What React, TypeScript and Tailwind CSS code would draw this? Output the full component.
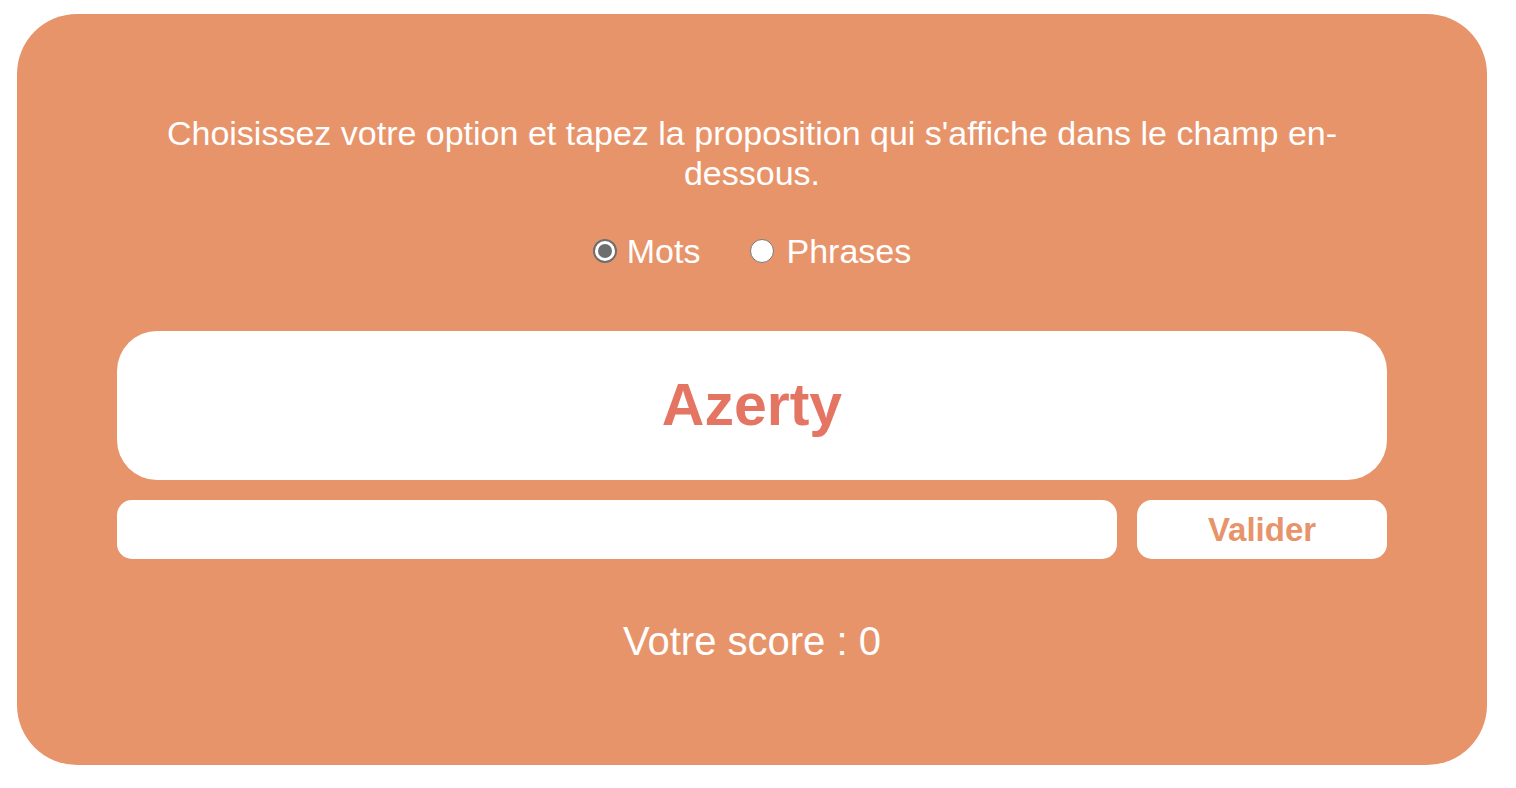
import React from "react";

export default function App() {
  return (
    <div className="min-h-[788px] bg-white pt-[14px] pl-[17px]" style={{ fontFamily: '"Liberation Sans", Arial, Helvetica, sans-serif' }}>
      <div className="w-[1470px] h-[751px] rounded-[60px] bg-[#E8946A] flex flex-col items-center pt-[99px]">
        <p className="w-[1270px] text-center text-white text-[34px] leading-[40px]">
          Choisissez votre option et tapez la proposition qui s'affiche dans le champ en-dessous.
        </p>
        <div className="mt-[38px] flex items-center h-[40px] text-white text-[34px]">
          <label className="flex items-center">
            <span className="w-[24px] h-[24px] rounded-full border-[2px] border-[#6e6e6e] bg-white flex items-center justify-center">
              <span className="w-[14px] h-[14px] rounded-full bg-[#6e6e6e]" />
            </span>
            <span className="ml-[10px]">Mots</span>
          </label>
          <label className="flex items-center ml-[50px]">
            <span className="w-[24px] h-[24px] rounded-full border-[1.5px] border-[#767676] bg-white" />
            <span className="ml-[12px]">Phrases</span>
          </label>
        </div>
        <div className="mt-[60px] w-[1270px] h-[149px] rounded-[40px] bg-white flex items-center justify-center">
          <span className="text-[59px] font-bold text-[#E57563] leading-none">Azerty</span>
        </div>
        <div className="mt-[20px] w-[1270px] flex gap-[20px]">
          <input className="w-[1000px] h-[59px] rounded-[15px] bg-white outline-none px-4 text-[24px]" />
          <button className="w-[250px] h-[59px] rounded-[15px] bg-white text-[#E8946A] font-bold text-[33px]">Valider</button>
        </div>
        <div className="mt-[59px] text-white text-[40px] leading-[46px]">Votre score : 0</div>
      </div>
    </div>
  );
}
